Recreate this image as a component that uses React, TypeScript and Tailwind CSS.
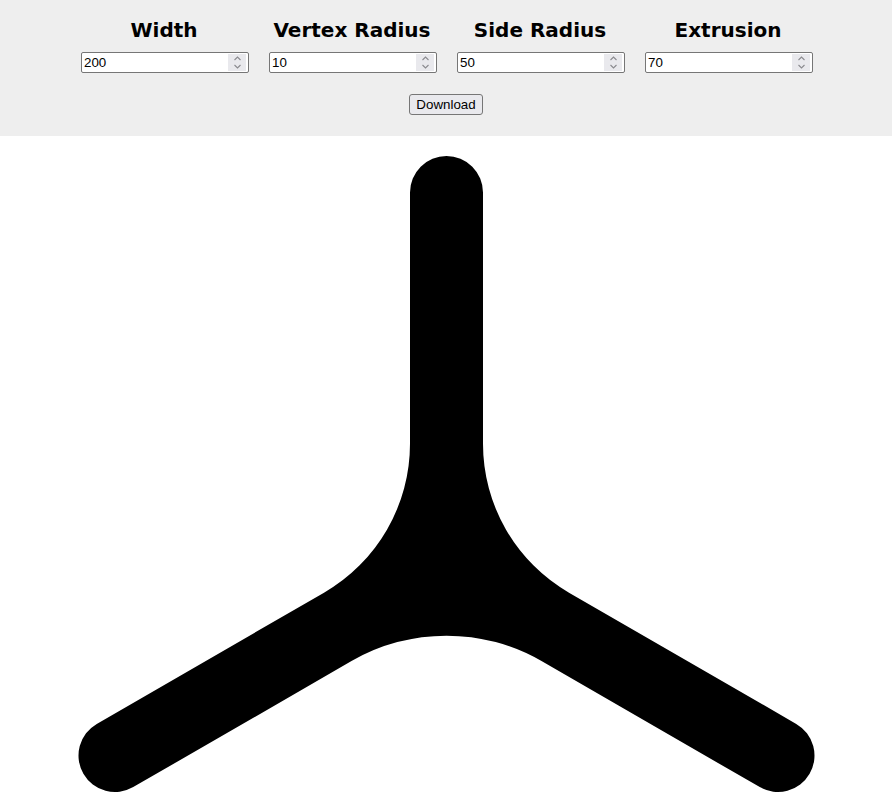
import { useState } from "react";

const FIELDS = [
  { key: "width", label: "Width", value: 200 },
  { key: "vertexRadius", label: "Vertex Radius", value: 10 },
  { key: "sideRadius", label: "Side Radius", value: 50 },
  { key: "extrusion", label: "Extrusion", value: 70 },
];

// outline of the three-armed shape, in page coordinates
const SHAPE =
  "M 483 443.7 L 483 192.5 A 36.5 36.5 0 0 0 410 192.5 L 410 443.7 " +
  "A 172 172 0 0 1 324 592.7 L 96.75 723.89 A 36.5 36.5 0 0 0 133.25 787.11 " +
  "L 351.5 661.1 A 190 190 0 0 1 541.5 661.1 L 759.75 787.11 " +
  "A 36.5 36.5 0 0 0 796.25 723.89 L 569 592.7 A 172 172 0 0 1 483 443.7 Z";

function Spinner() {
  return (
    <div className="absolute right-[3px] top-[2px] bottom-[2px] w-[18px] bg-[#e9e9ed] flex flex-col items-center justify-center pointer-events-none">
      <svg width="9" height="15" viewBox="0 0 9 15" fill="none" stroke="#8a8a8f" strokeWidth="1.1">
        <path d="M1.5 5 L4.5 2 L7.5 5" />
        <path d="M1.5 10 L4.5 13 L7.5 10" />
      </svg>
    </div>
  );
}

export default function App() {
  const [values, setValues] = useState<Record<string, number>>(
    Object.fromEntries(FIELDS.map((f) => [f.key, f.value]))
  );

  return (
    <div className="w-full bg-white">
      {/* Controls */}
      <div className="bg-[#eeeeee] pt-[16px] pb-[21px]">
        <div className="flex justify-center">
          {FIELDS.map((f) => (
            <div key={f.key} className="w-[188px] flex flex-col items-center">
              <h3 className="font-['DejaVu_Sans',sans-serif] font-bold text-[20px] leading-[28px] text-black">
                {f.label}
              </h3>
              <div className="relative mt-[8px] ml-[2px]">
                <input
                  type="number"
                  value={values[f.key]}
                  onChange={(e) =>
                    setValues({ ...values, [f.key]: Number(e.target.value) })
                  }
                  className="block w-[168px] h-[21px] pl-[2px] pr-[24px] border border-[#767676] rounded-[2px] bg-white text-[13.33px] leading-[15px] text-black font-['Liberation_Sans',sans-serif] [appearance:textfield] [&::-webkit-inner-spin-button]:appearance-none"
                />
                <Spinner />
              </div>
            </div>
          ))}
        </div>
        <div className="flex justify-center mt-[21px]">
          <button className="h-[21px] px-[6px] border border-[#767676] rounded-[3px] bg-[#e9e9ed] text-[13.33px] leading-[15px] text-black font-['Liberation_Sans',sans-serif]">
            Download
          </button>
        </div>
      </div>

      {/* Shape */}
      <svg width="892" height="675" viewBox="0 136 892 675" className="block">
        <path d={SHAPE} fill="#000" />
      </svg>
    </div>
  );
}
